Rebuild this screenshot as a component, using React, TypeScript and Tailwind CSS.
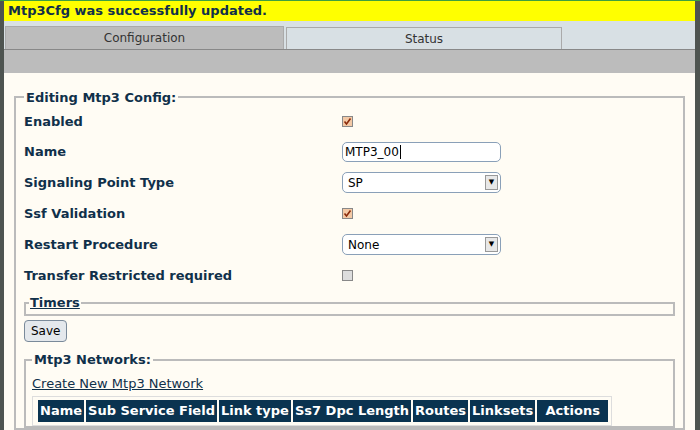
import React from 'react';

const font = { fontFamily: '"DejaVu Sans", "Liberation Sans", sans-serif' };
const bold = 'font-["Liberation_Sans",Arial,sans-serif] font-bold';

function Check({ on }: { on: boolean }) {
  return (
    <span className={`inline-flex h-[11px] w-[11px] items-center justify-center border border-[#888] ${on ? 'bg-[#f3c9a6]' : 'bg-[#ddd]'}`}>
      {on && (
        <svg width="9" height="9" viewBox="0 0 9 9">
          <path d="M1.5 4.5 L3.5 7 L7.5 1.5" stroke="#8a2a0a" strokeWidth="1.6" fill="none" />
        </svg>
      )}
    </span>
  );
}

function Select({ value }: { value: string }) {
  return (
    <div className="flex h-[21px] w-[159px] items-center justify-between rounded-[5px] border border-[#8aa0b8] bg-white pl-[5px] pr-[2px] text-[12px] text-black">
      <span>{value}</span>
      <span className="flex h-[15px] w-[13px] items-center justify-center border border-[#999] bg-[#e8e8e8] text-[7px]">▼</span>
    </div>
  );
}

export default function App() {
  const rows: { label: string; field: React.ReactNode }[] = [
    { label: 'Enabled', field: <Check on /> },
    {
      label: 'Name',
      field: (
        <div className="flex h-[20px] w-[159px] items-center rounded-[5px] border border-[#8aa0b8] bg-white pl-[2px] text-[12px] text-black">
          MTP3_00<span className="ml-px h-[14px] w-px bg-black" />
        </div>
      ),
    },
    { label: 'Signaling Point Type', field: <Select value="SP" /> },
    { label: 'Ssf Validation', field: <Check on /> },
    { label: 'Restart Procedure', field: <Select value="None" /> },
    { label: 'Transfer Restricted required', field: <Check on={false} /> },
  ];
  const cols = ['Name', 'Sub Service Field', 'Link type', 'Ss7 Dpc Length', 'Routes', 'Linksets', 'Actions'];
  return (
    <div className="h-[430px] w-[700px] overflow-hidden bg-[#4e5450]" style={font}>
      <div className="h-px bg-[#3fa040]" />
      <div className="ml-[4px] mr-[5px] flex h-[429px] flex-col bg-[#fffcf4]">
        <div className={`flex h-[23px] items-center bg-[#ffff00] pl-[4px] text-[13px] text-[#10304a] ${bold}`}>
          Mtp3Cfg was successfully updated.
        </div>
        <div className="flex h-[33px] items-end border-b border-[#888] bg-[#d8e0e4] pl-px">
          <div className="flex h-[23px] w-[279px] items-center justify-center border-x border-t border-[#aaa] bg-[#bcbcbc] text-[12px] text-[#333]">
            Configuration
          </div>
          <div className="ml-[2px] flex h-[22px] w-[276px] items-center justify-center border border-b-0 border-[#aaa] bg-[#d8e0e4] text-[12px] text-[#333]">
            Status
          </div>
        </div>
        <div className="h-[25px] bg-[#bcbcbc]" />
        <fieldset className="mx-[10px] mt-[15px] border-2 border-[#bbb] px-[8px] pb-0">
          <legend className={`px-[2px] text-[13px] text-[#10304a] ${bold}`}>Editing Mtp3 Config:</legend>
          <div className="flex flex-col">
            {rows.map((r, i) => (
              <div key={r.label} className={`flex items-center ${i === 0 ? 'h-[29px]' : 'h-[31px]'}`}>
                <div className={`w-[318px] text-[13px] text-[#10304a] ${bold}`}>{r.label}</div>
                <div className="flex items-center">{r.field}</div>
              </div>
            ))}
          </div>
          <fieldset className="mt-[5px] h-[20px] border-2 border-[#bbb] px-[3px]">
            <legend className={`px-[1px] text-[13px] leading-[14px] text-[#10304a] underline ${bold}`}>Timers</legend>
          </fieldset>
          <button className="mt-[4px] h-[22px] rounded-[4px] border border-[#7a8a9a] bg-[#e4e8ec] px-[6px] text-[12px] text-black">Save</button>
          <fieldset className="mt-[8px] border-2 border-[#bbb] px-[6px]">
            <legend className={`px-[2px] text-[13px] text-[#10304a] ${bold}`}>Mtp3 Networks:</legend>
            <div className="mt-[4px] font-['Liberation_Sans',Arial,sans-serif] text-[13px] text-[#10304a] underline">Create New Mtp3 Network</div>
            <div className="mt-[3px] inline-flex gap-[2px] border border-[#ddd] p-[3px] pl-[5px]">
              {cols.map((c) => (
                <div key={c} className={`flex h-[22px] items-center justify-center bg-[#0a3350] px-[2px] text-[13px] text-white ${bold} ${c === 'Actions' ? 'w-[71px]' : ''}`}>
                  {c}
                </div>
              ))}
            </div>
          </fieldset>
        </fieldset>
      </div>
    </div>
  );
}
